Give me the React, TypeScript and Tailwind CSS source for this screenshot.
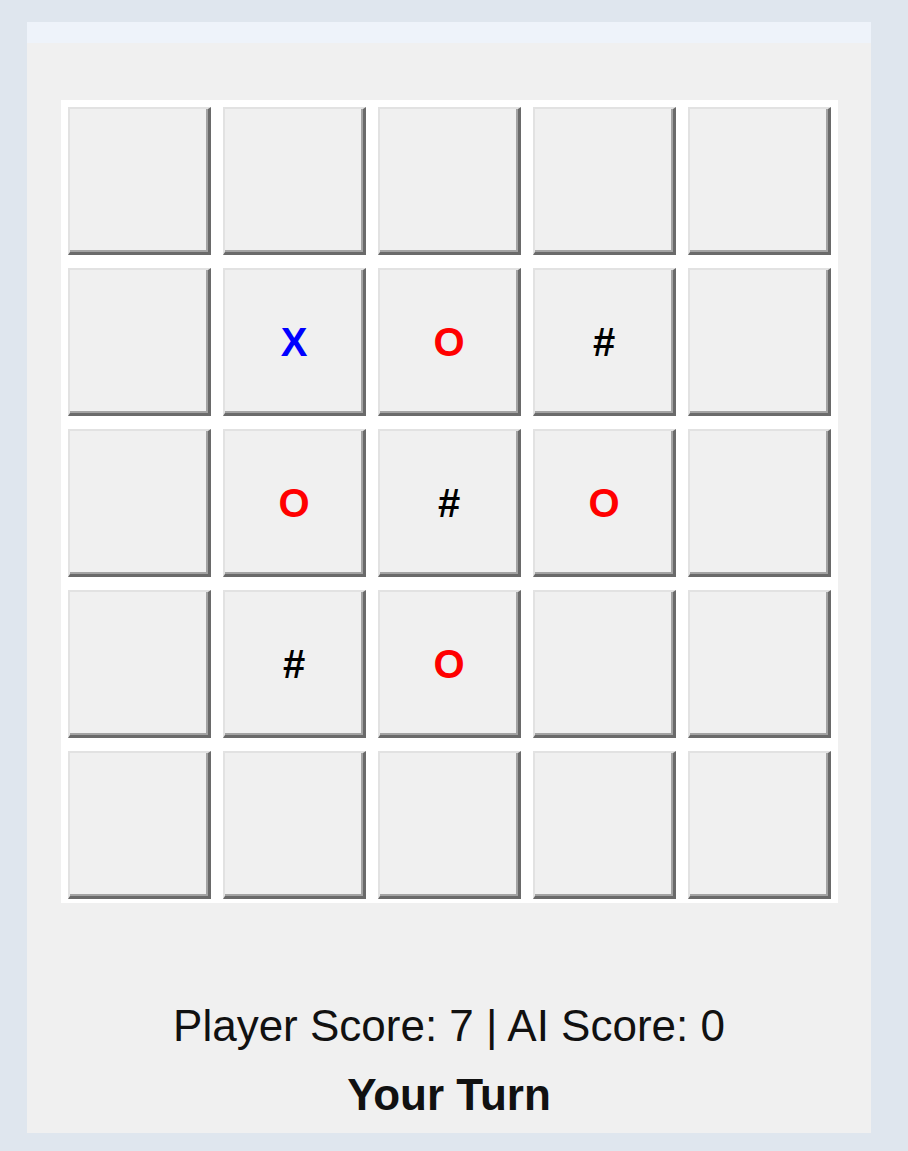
import React from "react";

type Mark = "" | "X" | "O" | "#";

// board state, row by row
const BOARD: Mark[][] = [
  ["", "", "", "", ""],
  ["", "X", "O", "#", ""],
  ["", "O", "#", "O", ""],
  ["", "#", "O", "", ""],
  ["", "", "", "", ""],
];

const markColor: Record<Mark, string> = {
  "": "text-black",
  X: "text-[#0000ff]",
  O: "text-[#ff0000]",
  "#": "text-black",
};

function Cell({ mark }: { mark: Mark }) {
  return (
    <button
      className={`h-[148px] w-[143px] flex items-center justify-center bg-[#f0f0f0] border-t-2 border-l-2 border-t-[#e2e2e2] border-l-[#e2e2e2] border-r-[3px] border-b-[3px] border-r-[#6a6a6a] border-b-[#6a6a6a] shadow-[inset_-2px_-2px_0_#a3a3a3] text-[40px] font-bold leading-none ${markColor[mark]}`}
    >
      {mark}
    </button>
  );
}

export default function App() {
  return (
    <div
      className="min-h-[1151px] w-full bg-[#dfe6ee] pt-[22px] pl-[27px]"
      style={{ fontFamily: '"Liberation Sans", Arial, sans-serif' }}
    >
      <div className="w-[844px] bg-[#f0f0f0]">
        {/* title strip */}
        <div className="h-[21px] bg-[#eef3fa]" />

        {/* board */}
        <div className="mt-[57px] ml-[34px] w-[777px] bg-white pt-[7px] pl-[7px] pb-[4px]">
          <div className="grid grid-cols-[repeat(5,143px)] gap-x-[12px] gap-y-[13px]">
            {BOARD.flatMap((row, r) =>
              row.map((m, c) => <Cell key={`${r}-${c}`} mark={m} />)
            )}
          </div>
        </div>

        {/* status */}
        <div className="mt-[98px] pb-[13px] text-center text-[#111]">
          <div className="text-[44px] leading-[50px]">Player Score: 7 | AI Score: 0</div>
          <div className="mt-[19px] text-[44px] leading-[50px] font-bold">Your Turn</div>
        </div>
      </div>
    </div>
  );
}
